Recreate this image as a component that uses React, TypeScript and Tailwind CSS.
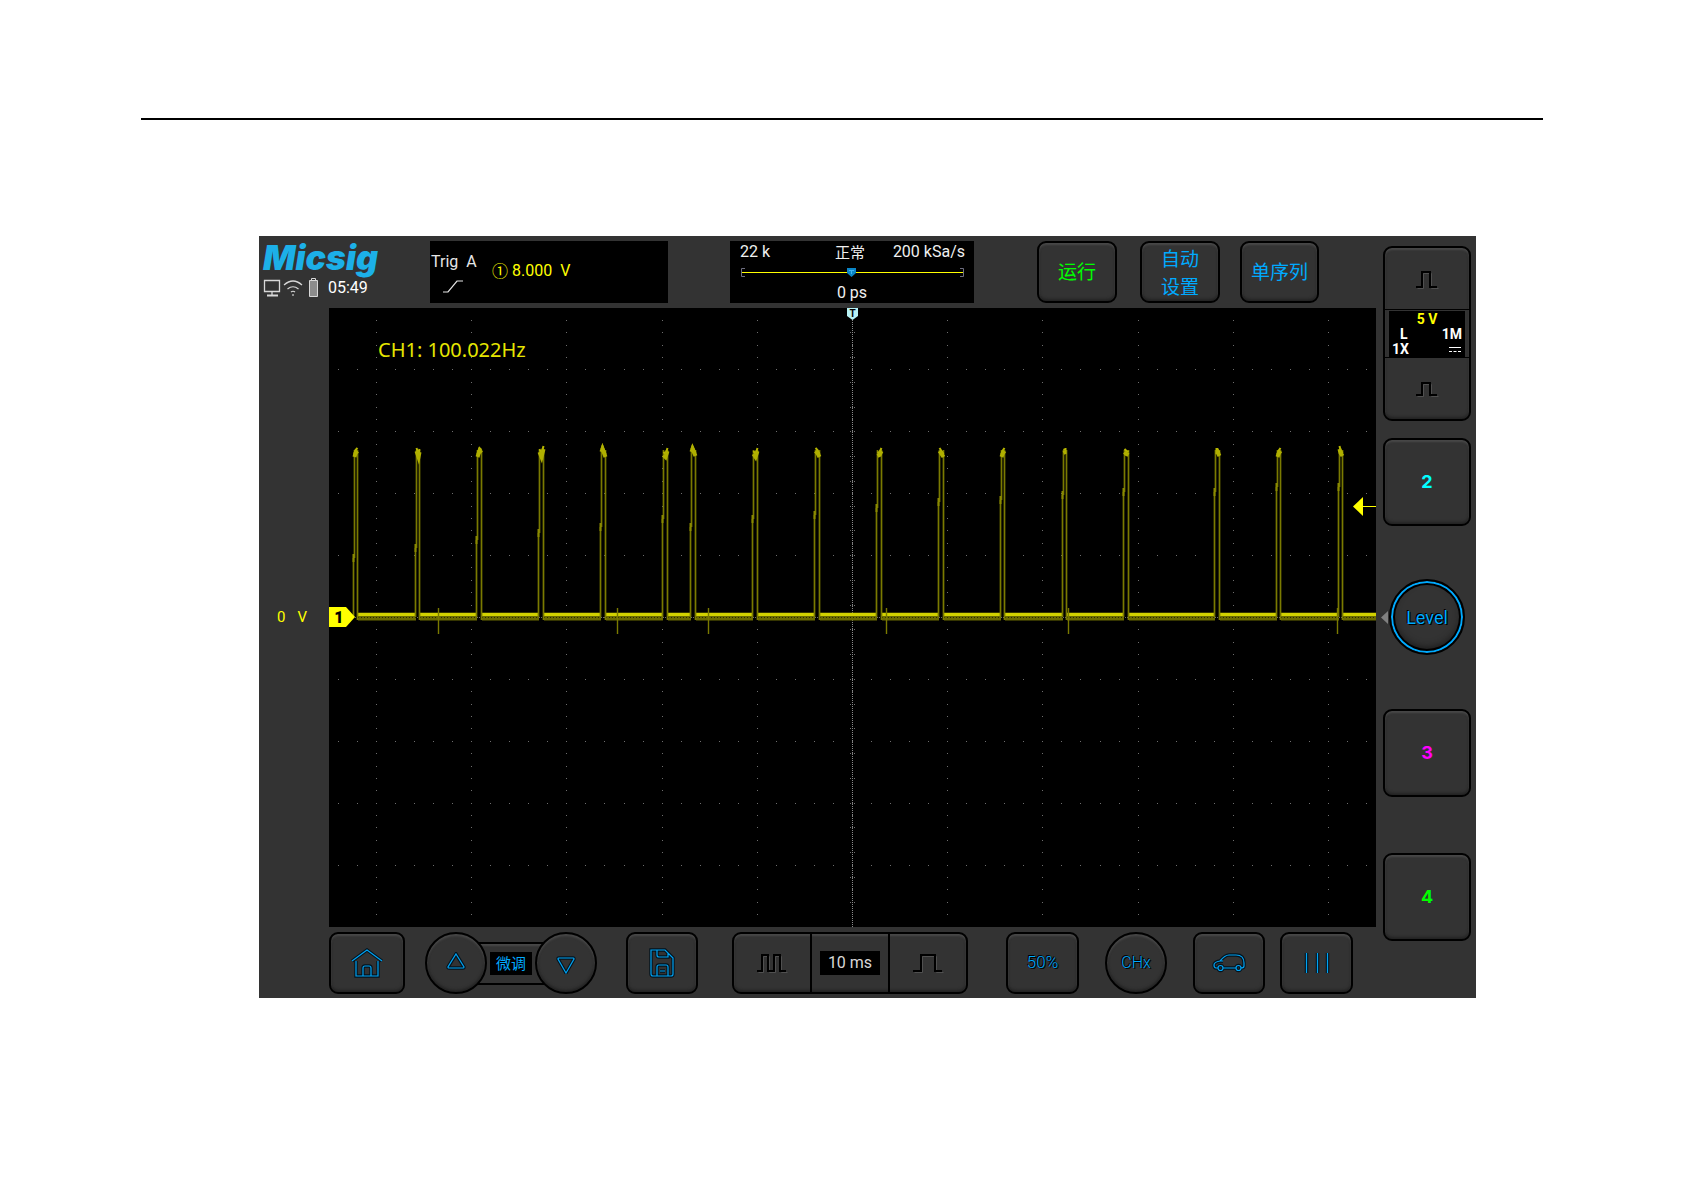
import React from "react";
import { clsx } from "clsx";

const keyClasses =
  "flex shrink-0 items-center justify-center border-2 border-black bg-[#333333] shadow-[inset_0_2px_2px_#484848,inset_0_-2px_3px_#222222]";

interface KeyProps {
  label?: string;
  className?: string;
  children: React.ReactNode;
}

const Key: React.FC<KeyProps> = ({ label, className, children }) => (
  <button type="button" aria-label={label} className={clsx(keyClasses, className)}>
    {children}
  </button>
);

interface GlyphProps {
  d: string;
  width: number;
  height: number;
}

// Blue line drawing with a dark rim, like the print on the keys
const Glyph: React.FC<GlyphProps> = ({ d, width, height }) => (
  <svg width={width} height={height} viewBox={`0 0 ${width} ${height}`} fill="none">
    <path d={d} stroke="#04131d" strokeWidth="3.4" />
    <path d={d} stroke="#00a2f2" strokeWidth="1.2" />
  </svg>
);

const Pulse: React.FC<GlyphProps> = ({ d, width, height }) => (
  <svg width={width} height={height} viewBox={`0 0 ${width} ${height}`} fill="none">
    <path d={d} stroke="#505050" strokeWidth="1" transform="translate(1.5 1.5)" />
    <path d={d} stroke="#000000" strokeWidth="2" />
  </svg>
);

const PLOT_W = 1047;
const PLOT_H = 619;
const CENTER_X = 523;
const CENTER_Y = 309;

const range = (from: number, to: number) =>
  Array.from({ length: to - from + 1 }, (_, i) => from + i);

const columns = range(-5, 5).map((i) => Math.round(CENTER_X + i * 95.2));
const rows = range(-4, 4).map((i) => Math.round(CENTER_Y + i * 61.9));
const dotYs = range(-24, 24).map((i) => Math.round(CENTER_Y + i * 12.38));
const dotXs = range(-27, 27).map((i) => Math.round(CENTER_X + i * 19.04));

const gridPath = [
  ...columns.flatMap((x) => dotYs.map((y) => `M${x} ${y}h1v1h-1z`)),
  ...rows.flatMap((y) => dotXs.map((x) => `M${x} ${y}h1v1h-1z`)),
].join("");

const tickPath = dotYs
  .filter((_, i) => i % 2 === 1)
  .map((y) => `M${CENTER_X - 2} ${y}h1v1h-1zM${CENTER_X + 2} ${y}h1v1h-1z`)
  .join("");

// [foot of the rising edge, top of the rising edge, falling edge, y of the kink]
const pulses = [
  [24, 25, 28, 250],
  [86, 87, 90, 240],
  [147, 148, 152, 232],
  [209, 210, 214, 225],
  [271, 272, 276, 219],
  [333, 334, 338, 211],
  [361, 362, 366, 219],
  [423, 424, 428, 211],
  [485, 486, 490, 207],
  [547, 548, 552, 200],
  [609, 610, 614, 194],
  [671, 672, 675, 192],
  [733, 734, 737, 187],
  [794, 795, 799, 184],
  [885, 886, 890, 184],
  [947, 948, 951, 179],
  [1009, 1010, 1013, 179],
];

// Upper outline of each pulse top, drawn from the rising edge
const caps = [
  "0,4 1,0 3,-2",
  "0,-2 2,4 3,-1",
  "0,4 2,-2 4,0",
  "0,-1 2,4 4,-4",
  "0,-1 1,-4 4,4",
  "0,2 2,4 4,-2",
  "0,-1 1,-4 4,3",
  "0,1 2,4 4,-2",
  "0,-2 2,0 4,4",
  "0,3 2,2 4,-2",
  "0,-2 2,1 4,4",
  "0,4 1,1 3,-2",
  "0,0 2,-1 3,-1",
  "0,-1 2,1 4,2",
  "0,-1 2,-1 4,3",
  "0,4 1,1 3,-2",
  "0,-4 1,0 3,3",
];

const glitches = [109, 288, 379, 557, 739, 1008];

const Trace = () => (
  <svg viewBox={`0 0 ${PLOT_W} ${PLOT_H}`} className="block h-auto w-full" role="img" aria-label="CH1">
    <path d={gridPath} fill="#6e6e6e" />
    <path d={tickPath} fill="#6e6e6e" />
    <path d={`M${CENTER_X + 0.5} 0V${PLOT_H}`} stroke="#8a8a8a" strokeDasharray="1 1" />
    <path d={`M0 ${CENTER_Y + 0.5}H${PLOT_W}`} stroke="#6e6e6e" strokeDasharray="1 1" />
    {pulses.map(([foot, rise, fall, kink], i) => {
      const end = i + 1 < pulses.length ? pulses[i + 1][0] : PLOT_W;
      return (
        <g key={foot} fill="none">
          <path d={`M${fall + 1} 308.500H${end + 1}`} stroke="#6b6b00" strokeWidth="8" />
          <path d={`M${fall + 1} 306.500H${end + 1}`} stroke="#d2d200" strokeWidth="3" />
          <path d={`M${fall + 1} 309.500H${end + 1}`} stroke="#2b2b00" strokeDasharray="1 2" />
          <path
            d={`M${foot + 0.5} 309V${kink}M${rise + 0.5} ${kink}V142M${fall + 0.5} 142V312`}
            stroke="#7a7a00"
            strokeWidth="1.7"
          />
          <path d={`M${foot + 0.5} ${kink + 4}V${kink - 4}`} stroke="#8a8a00" strokeWidth="2" />
          <polyline
            points={caps[i]}
            transform={`translate(${rise + 0.5} 142)`}
            stroke="#b8b800"
            strokeWidth="2"
          />
          <polyline
            points={caps[i]}
            transform={`translate(${rise + 0.5} 145)`}
            stroke="#b0b000"
            strokeWidth="4"
          />
        </g>
      );
    })}
    {glitches.map((x) => (
      <path key={x} d={`M${x + 0.5} 300V326`} stroke="#7a7a00" strokeWidth="1.4" />
    ))}
    <path d="M1047 198.500H1030" stroke="#ffff00" />
    <path d="M1024 198.500L1034 189V208Z" fill="#ffff00" />
    <path d="M0 299H17L26 309L17 319H0Z" fill="#ffff00" />
    <text x="10" y="315" fontSize="16" fontWeight="900" textAnchor="middle" fill="#000000">
      1
    </text>
    <path d="M518 0H529V8L523.500 12L518 8Z" fill="#b8f2f5" />
    <text x="523.5" y="9" fontSize="10" fontWeight="700" textAnchor="middle" fill="#000000">
      T
    </text>
  </svg>
);

const StatusIcons = () => (
  <div className="flex items-center gap-[10px] pt-[2px]">
    <svg width="55" height="20" viewBox="0 0 55 20" fill="none" stroke="#d8d8d8">
      <path d="M1.500 2.500H16.500V13.500H1.500ZM9 14V17" strokeWidth="1.300" />
      <path d="M4 17.500H15" strokeWidth="2" />
      <path d="M21 7Q30 -1 39 7M24.500 11Q30 6.500 35.500 11M28 14Q30 12.500 32 14" strokeWidth="1.200" />
      <circle cx="30" cy="17" r=".5" />
      <path d="M46.500 2.500H54.500V18.500H46.500Z" fill="#8c8c8c" />
      <path d="M48.500 2V.5H52.500V2" />
    </svg>
    <span className="text-base leading-[22px] text-white">05:49</span>
  </div>
);

const TopBar = () => (
  <header className="flex h-[72px] pt-[5px] pr-[57px]">
    <div className="w-[171px] shrink-0 pl-1">
      <h1 className="h-[34px] font-['Inter'] text-[34px] leading-[34px] font-black text-[#1cb0e8] italic">
        Micsig
      </h1>
      <StatusIcons />
    </div>

    {/* Trigger readout */}
    <section className="flex h-[62px] w-[238px] shrink-0 bg-black text-base leading-5">
      <div className="w-[62px] pt-[11px] pl-px text-[#e6e6e6]">
        <div className="flex gap-2">
          <span>Trig</span>
          <span>A</span>
        </div>
        <svg width="20" height="13" viewBox="0 0 20 13" className="mt-2 ml-3" fill="none" stroke="#e6e6e6">
          <path d="M0 12H5L14 1H20" strokeWidth="1.200" />
        </svg>
      </div>
      <div className="flex h-10 items-end gap-2 text-[#ffff00]">
        <span className="flex gap-1">
          <span className="font-['Noto_Sans_CJK_SC'] leading-[18px]">①</span>
          <span>8.000</span>
        </span>
        <span>V</span>
      </div>
    </section>

    {/* Memory bar */}
    <section className="ml-[62px] h-[62px] w-[244px] shrink-0 bg-black pt-px text-base leading-5 text-[#f0f0f0]">
      <div className="grid grid-cols-3 px-[9px]">
        <span className="pl-px">22 k</span>
        <span className="pr-1 text-center font-['Noto_Sans_CJK_SC',sans-serif] text-[15px]">正常</span>
        <span className="text-right whitespace-nowrap">200 kSa/s</span>
      </div>
      <svg width="244" height="20" viewBox="0 0 244 20" className="block" fill="none">
        <path d="M12 10.500H233" stroke="#ffff00" />
        <path d="M15 6.500H11.500V14.500H15M230 6.500H233.500V14.500H230" stroke="#6e6e80" />
        <path d="M117 6H126V11L121.500 15L117 11Z" fill="#0a86c8" />
        <path d="M119 8.500H124M121.500 8V12" stroke="#3fb4f0" />
      </svg>
      <p className="pt-px text-center">0 ps</p>
    </section>

    {/* Acquisition keys */}
    <div className="ml-auto flex h-[62px] font-['Noto_Sans_CJK_SC',sans-serif] text-[19px] leading-7 text-[#00aaff]">
      <Key className="w-20 rounded-[9px] pb-[2px] text-[#00ff00]">运行</Key>
      <Key className="ml-[23px] w-20 rounded-[9px]">
        <span className="w-10">自动设置</span>
      </Key>
      <Key className="ml-5 w-[79px] rounded-[9px] pb-[2px]">单序列</Key>
    </div>
  </header>
);

const BottomBar = () => (
  <footer className="flex h-[71px] items-start pt-[5px] pl-[70px]">
    <Key label="Home" className="h-[62px] w-[76px] rounded-[9px]">
      <Glyph
        width={32}
        height={30}
        d="M1 13L16 2L31 13M5 13V28H27V13M12 28V20Q12 18 14 18H18Q20 18 20 20V28"
      />
    </Key>

    {/* Fine adjustment */}
    <div className="ml-5 flex items-center">
      <Key label="Up" className="z-10 size-[62px] rounded-full pb-1">
        <Glyph width={20} height={18} d="M10 2L18 15Q18 16 17 16H3Q2 16 2 15Z" />
      </Key>
      <div className="-mx-3 flex h-[43px] w-[72px] items-center justify-center border-y-2 border-black bg-[#333333] shadow-[inset_0_2px_2px_#484848]">
        <span className="bg-black px-[6px] pb-[2px] font-['Noto_Sans_CJK_SC',sans-serif] text-[15px] leading-[21px] text-[#00aaff]">
          微调
        </span>
      </div>
      <Key label="Down" className="z-10 size-[62px] rounded-full pt-1">
        <Glyph width={20} height={18} d="M10 17L18 3Q18 2 17 2H3Q2 2 2 3Z" />
      </Key>
    </div>

    <Key label="Save" className="ml-[29px] h-[62px] w-[72px] rounded-[9px]">
      <Glyph
        width={26}
        height={30}
        d="M2 2H16L24 10V26Q24 28 22 28H4Q2 28 2 26ZM8 2V7Q8 9 10 9H19V5M8 28V19Q8 17 10 17H17Q19 17 19 19V28M11 23H16"
      />
    </Key>

    {/* Time base */}
    <div className="ml-[34px] flex h-[62px] w-[236px] shrink-0 divide-x-2 divide-black overflow-hidden rounded-[9px] border-2 border-black bg-[#333333] shadow-[inset_0_2px_2px_#484848,inset_0_-2px_3px_#222222]">
      <button type="button" aria-label="Slower" className="flex flex-1 items-center justify-center">
        <Pulse width={32} height={22} d="M1 19H6V3H12V19H18V3H24V19H30" />
      </button>
      <div className="flex flex-1 items-center justify-center">
        <span className="bg-black px-2 text-base leading-6 whitespace-nowrap text-[#d8d8d8]">10 ms</span>
      </div>
      <button type="button" aria-label="Faster" className="flex flex-1 items-center justify-center">
        <Pulse width={32} height={22} d="M1 19H9V3H23V19H30" />
      </button>
    </div>

    <Key className="ml-[38px] h-[62px] w-[73px] rounded-[9px]">
      <span className="text-[17px] font-light text-[#00aaff] [text-shadow:0_0_1px_#000,1px_1px_0_#000,-1px_-1px_0_#000]">50%</span>
    </Key>
    <Key className="ml-[26px] size-[62px] rounded-full">
      <span className="text-base font-light text-[#00aaff] [text-shadow:0_0_1px_#000,1px_1px_0_#000,-1px_-1px_0_#000]">CHx</span>
    </Key>
    <Key label="Automotive" className="ml-[26px] h-[62px] w-[72px] rounded-[9px]">
      <Glyph
        width={34}
        height={20}
        d="M6 15H4Q2 15 2 12Q2 9 8 8Q13 2 17 2H24Q32 2 32 10V13Q32 15 29 15M11 15H24M8 8H11M11 15A2.500 2.500 0 1 1 6 15A2.500 2.500 0 1 1 11 15M29 15A2.500 2.500 0 1 1 24 15A2.500 2.500 0 1 1 29 15"
      />
    </Key>
    <Key label="Menu" className="ml-[15px] h-[62px] w-[73px] rounded-[9px]">
      <Glyph width={26} height={22} d="M2.500 1V21M13.500 1V21M23.500 1V21" />
    </Key>
  </footer>
);

const channels = [
  { id: "2", className: "mt-[17px] text-[#00ffff]" },
  { id: "3", className: "mt-[54px] text-[#ff00ff]" },
  { id: "4", className: "mt-14 text-[#00ff00]" },
];

const ChannelKey: React.FC<{ id: string; className: string }> = ({ id, className }) => (
  <Key className={clsx("size-[88px] rounded-[9px] font-['Inter'] text-lg font-bold", className)}>{id}</Key>
);

const SideBar = () => (
  <aside className="flex w-[100px] shrink-0 flex-col items-center pt-[10px] pl-[2px]">
    {/* Channel 1 */}
    <div className="flex h-[175px] w-[88px] shrink-0 flex-col overflow-hidden rounded-[9px] border-2 border-black bg-[#333333] shadow-[inset_0_2px_2px_#484848,inset_0_-2px_3px_#222222]">
      <button type="button" aria-label="Scale up" className="flex flex-1 items-center justify-center">
        <Pulse width={24} height={20} d="M1 18H7V3H15V18H22" />
      </button>
      <div className="border-y border-black px-1 pt-px text-sm leading-[15px] font-bold text-white">
        <div className="bg-black px-[3px] pt-px">
          <p className="text-center text-[#ffff00]">5 V</p>
          <div className="flex justify-between pl-2">
            <span>L</span>
            <span>1M</span>
          </div>
          <div className="flex items-center justify-between">
            <span>1X</span>
            <svg width="14" height="7" viewBox="0 0 14 7" stroke="#ffffff">
              <path d="M1 1.500H13" />
              <path d="M1 5.500H13" strokeDasharray="3 1.500" />
            </svg>
          </div>
        </div>
      </div>
      <button type="button" aria-label="Scale down" className="flex flex-1 items-center justify-center">
        <Pulse width={24} height={20} d="M1 16H7V4H15V16H22" />
      </button>
    </div>

    <ChannelKey {...channels[0]} />

    <div className="relative mt-[53px]">
      <svg width="7" height="13" viewBox="0 0 7 13" className="absolute top-[32px] -left-2">
        <path d="M0 6.500L7 0V13Z" fill="#808080" />
      </svg>
      <button
        type="button"
        className="flex size-[76px] items-center justify-center rounded-full border-2 border-black bg-[#333333] pt-[2px] text-lg text-[#00aaff] shadow-[inset_0_0_0_2px_#00aaff,inset_0_0_0_4px_#000000,inset_0_-4px_8px_#111111] [text-shadow:0_0_1px_#000,1px_1px_0_#000,-1px_-1px_0_#000]"
      >
        Level
      </button>
    </div>

    <ChannelKey {...channels[1]} />
    <ChannelKey {...channels[2]} />
  </aside>
);

const App: React.FC = () => {
  return (
    <div className="min-h-screen bg-white pt-[118px] font-['Roboto',sans-serif]">
      <hr className="mr-[142px] ml-[141px] border-t-2 border-black" />

      {/* Oscilloscope */}
      <main className="mt-[116px] mr-[209px] ml-[259px] flex bg-[#333333]">
        <div className="min-w-0 flex-1">
          <TopBar />
          <div className="flex">
            <div className="flex w-[70px] shrink-0 items-center justify-center gap-3 pr-1 text-[15px] text-[#ffff00]">
              <span>0</span>
              <span>V</span>
            </div>
            <div className="relative flex-1 bg-black">
              <Trace />
              <p className="absolute top-7 left-[49px] font-['Noto_Sans',sans-serif] text-xl leading-7 text-[#e6e600]">
                CH1: 100.022Hz
              </p>
            </div>
          </div>
          <BottomBar />
        </div>
        <SideBar />
      </main>
    </div>
  );
};

export default App;
